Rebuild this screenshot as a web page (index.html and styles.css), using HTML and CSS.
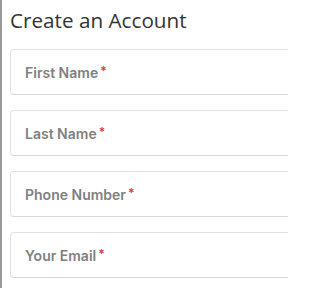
FILE: index.html
```html
<!DOCTYPE html>
<html>
<head>
<meta charset="utf-8">
<link rel="stylesheet" href="styles.css">
</head>
<body>
<div class="page">
  <h1 class="title">Create an Account</h1>
  <form class="form">
    <div class="field"><span class="label">First Name</span><span class="req">*</span></div>
    <div class="field"><span class="label">Last Name</span><span class="req">*</span></div>
    <div class="field"><span class="label">Phone Number</span><span class="req">*</span></div>
    <div class="field"><span class="label">Your Email</span><span class="req">*</span></div>
  </form>
</div>
</body>
</html>
```
FILE: styles.css
```css
html, body {
  margin: 0;
  padding: 0;
  background: #fff;
  overflow: hidden;
}
.page {
  width: 288px;
  height: 288px;
  border-left: 2px solid #9a9a9a;
  box-sizing: border-box;
  padding-left: 8px;
  overflow: hidden;
}
.title {
  margin: 0;
  padding-top: 6px;
  font-family: "Open Sans", sans-serif;
  font-weight: 400;
  font-size: 20.7px;
  line-height: 28px;
  color: #333;
}
.form {
  display: flex;
  flex-direction: column;
  gap: 15px;
  margin-top: 15px;
  width: 320px;
}
.field {
  height: 46px;
  box-sizing: border-box;
  border: 1px solid #e2e2e2;
  border-bottom-color: #d8d8d8;
  border-radius: 4px;
  display: flex;
  align-items: center;
  padding-left: 14px;
  font-family: Inter, sans-serif;
  font-weight: 600;
  font-size: 14px;
}
.label { color: #808080; }
.req { color: #e03a3a; margin-left: 2px; font-size: 12px; position: relative; top: -2px; }
```
